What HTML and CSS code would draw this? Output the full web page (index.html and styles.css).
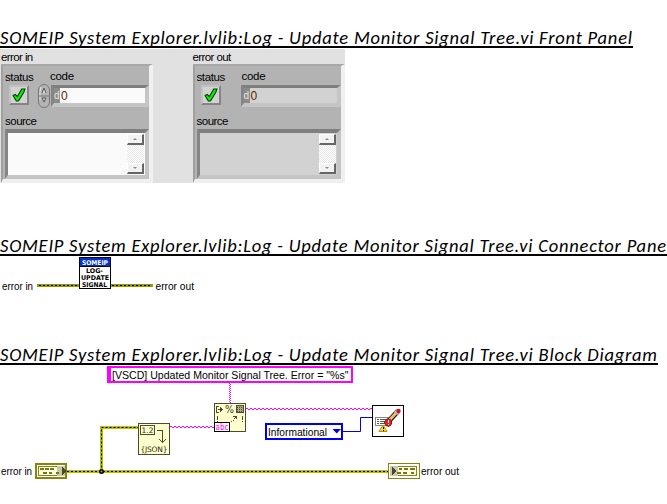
FILE: index.html
```html
<!DOCTYPE html>
<html lang="en">
<head>
<meta charset="utf-8">
<title>SOMEIP System Explorer.lvlib:Log - Update Monitor Signal Tree.vi</title>
<link rel="stylesheet" href="styles.css">
</head>
<body>
<h1 class="heading first"><svg width="633" height="26"><text x="0" y="24" textLength="632">SOMEIP System Explorer.lvlib:Log - Update Monitor Signal Tree.vi Front Panel</text></svg></h1>

<section class="panel">
  <div class="control">
    <div class="caption">error in</div>
    <div class="cluster">
      <div class="fields">
        <div class="status"><span class="label w-status">status</span>
          <span class="led"><svg width="14" height="14" viewBox="0 0 13 13"><path class="tick" d="M1 7L3 6L5 8L9 1L12 1L11 4L6 12L4 12Z"/></svg></span>
        </div>
        <div class="code"><span class="label">code</span>
          <div class="numrow">
            <svg class="spin" width="13" height="24" viewBox="0 0 13 24"><rect x=".5" y=".5" width="11" height="23" rx="5.5" fill="#b4b4b4" stroke="#777"/><path d="M3 3Q1.500 6 2 16" stroke="#e5e5e5" fill="none"/><path d="M1 12H12" stroke="#777"/><path d="M4 9L6 4L8 9M4 14H8L6 18Z" stroke="#555" fill="#ddd"/></svg>
            <div class="number"><span class="radix">d</span><span class="value">0</span></div>
          </div>
        </div>
      </div>
      <div class="label source-label w-source">source</div>
      <div class="source"><div class="scroll"><span class="arrow up"></span><span class="arrow down"></span></div></div>
    </div>
  </div>
  <div class="control indicator">
    <div class="caption">error out</div>
    <div class="cluster">
      <div class="fields">
        <div class="status"><span class="label w-status">status</span>
          <span class="led"><svg width="14" height="14" viewBox="0 0 13 13"><path class="tick" d="M1 7L3 6L5 8L9 1L12 1L11 4L6 12L4 12Z"/></svg></span>
        </div>
        <div class="code"><span class="label">code</span>
          <div class="numrow">
            <div class="number"><span class="radix">d</span><span class="value">0</span></div>
          </div>
        </div>
      </div>
      <div class="label source-label w-source">source</div>
      <div class="source"><div class="scroll"><span class="arrow up"></span><span class="arrow down"></span></div></div>
    </div>
  </div>
</section>

<h1 class="heading second"><svg width="667" height="26"><text x="0" y="24" textLength="666">SOMEIP System Explorer.lvlib:Log - Update Monitor Signal Tree.vi Connector Pane</text></svg></h1>

<svg class="canvas" width="667" height="44" viewBox="0 256 667 44">
  <path class="err" d="M37 285.5H79M111 285.5H153"/>
  <path class="errdash" d="M39 285.5H79M112 285.5H152"/>
  <rect x="79.5" y="257.5" width="31" height="31" fill="#fff" stroke="#000"/>
  <rect x="80" y="258" width="30" height="8" fill="#0033cc"/>
  <path d="M80 266.5H110" stroke="#000"/>
  <g class="pix">
    <text x="82" y="264.500" textLength="26" lengthAdjust="spacingAndGlyphs" fill="#fff">SOMEIP</text>
    <text x="86" y="273" textLength="17" lengthAdjust="spacingAndGlyphs">LOG-</text>
    <text x="81" y="280" textLength="28" lengthAdjust="spacingAndGlyphs">UPDATE</text>
    <text x="82" y="287" textLength="25" lengthAdjust="spacingAndGlyphs">SIGNAL</text>
  </g>
  <text class="lbl" x="2" y="290" textLength="31" lengthAdjust="spacingAndGlyphs">error in</text>
  <text class="lbl" x="155.500" y="290" textLength="38.500" lengthAdjust="spacingAndGlyphs">error out</text>
</svg>

<h1 class="heading third"><svg width="658" height="26"><text x="0" y="24" textLength="657">SOMEIP System Explorer.lvlib:Log - Update Monitor Signal Tree.vi Block Diagram</text></svg></h1>

<svg class="canvas" width="667" height="139" viewBox="0 365 667 139">
  <path class="err bright" d="M67 471.500H388M101.500 471.500V427.500H138"/>
  <path class="errdash" d="M67 471.500H388M101.500 471.500V427.500H138"/>
  <circle cx="101.500" cy="471.500" r="2.500" fill="#000"/><circle cx="101.500" cy="471.500" r="1" fill="#aa0"/>

  <path d="M229.500 383V403M230.500 384V403" stroke="#f0f" stroke-dasharray="1 1"/>
  <path class="str" d="M170 426.500H214M246 408.500H372"/>
  <path class="str low" d="M172 427.500H214M248 409.500H372"/>

  <rect x="107" y="366" width="246" height="17" fill="#f0f"/>
  <rect x="111" y="368" width="240" height="13" fill="#fff"/>
  <text class="lbl" x="112" y="379" textLength="236.500" lengthAdjust="spacingAndGlyphs">[VSCD] Updated Monitor Signal Tree. Error = "%s"</text>

  <g shape-rendering="crispEdges">
    <rect x="138.500" y="423.500" width="31" height="31" fill="#ffffce" stroke="#4b4b32"/>
    <rect x="140.500" y="425.500" width="14" height="9" fill="none" stroke="#4b4b32"/>
    <path d="M157 430.500H162.500V442M159 439.500H160M160 440.500H161M161 441.500H162M162 442.500H163M163 441.500H164M164 440.500H165M165 439.500H166" fill="none" stroke="#4b4b32"/>
    <rect x="214.500" y="403.500" width="31" height="28" fill="#ffffce" stroke="#4b4b32"/>
    <path d="M216.500 406V413M216 406.500H219M216 412.500H219M218 409.500H223M220.500 407V412M221.500 408V411M217.500 416V420M217.500 421V422M242.500 416V420M242.500 421V422M231 421.500H232M233 420.500H234M234 418.500H235M233 416.500H237M235.500 416V418M236.500 416V419" stroke="#4b4b32"/>
    <rect x="236.500" y="405.500" width="7" height="7" fill="#aaa985" stroke="#4b4b32"/>
    <path d="M237 407.500H243M237 409.500H243M237 411.500H243" stroke="#4b4b32" stroke-dasharray="1 1"/>
    <rect x="214.500" y="422.500" width="15" height="9" fill="#fff" stroke="#000"/>
  </g>
  <text class="pix node" x="141.500" y="433" textLength="12">1.2</text>
  <text class="pix node" x="140.500" y="452" textLength="27">{JSON}</text>
  <text class="pct" x="225" y="413" textLength="9" lengthAdjust="spacingAndGlyphs">%</text>
  <text class="abc" x="215.500" y="430" textLength="13" lengthAdjust="spacingAndGlyphs">abc</text>

  <rect x="266" y="424" width="76" height="15" fill="#fff" stroke="#0000f0" stroke-width="2"/>
  <text class="lbl" x="268" y="436" textLength="59" lengthAdjust="spacingAndGlyphs">Informational</text>
  <path d="M332.500 429H341L336.700 433.500Z" fill="#0000e0"/>
  <path d="M343 431.500H360.500V417.500H372" fill="none" stroke="#0000f0"/>

  <rect x="372.500" y="405.500" width="31" height="31" fill="#fff" stroke="#000"/>
  <g>
    <rect x="375.500" y="417.500" width="15" height="8" fill="#fff" stroke="#888"/>
    <path d="M377 419.500H379M380 419.500H387M377 421.500H379M380 421.500H386M377 423.500H379M380 423.500H385" stroke="#555"/>
    <path d="M383 425L387 431.500H379Z" fill="#ffd83a" stroke="#b98b00"/>
    <path d="M383.500 427V429M383.500 430V431" stroke="#000"/>
    <path d="M388 422L398 411" stroke="#222" stroke-width="5"/>
    <path d="M389 420.500L397 412" stroke="#f3ba78" stroke-width="2.800"/>
    <path d="M395.500 413.500L398 411" stroke="#bbb" stroke-width="4.500"/>
    <circle cx="398.500" cy="411" r="2.200" fill="#d3122a"/>
    <path d="M385.500 420.500L388 418.500L391.500 420.500V424L389 426.500L386 425.500L384.500 423Z" fill="#e82020" stroke="#8c1010"/>
    <path d="M388.500 420V423M388.500 424V425" stroke="#fff"/>
  </g>

  <g shape-rendering="crispEdges">
    <rect x="36" y="464" width="30" height="14" fill="#fff" stroke="#86860a" stroke-width="2"/>
    <rect x="38.500" y="466.500" width="25" height="9" fill="#fffff0" stroke="#86860a"/>
    <rect x="57" y="466" width="8" height="10" fill="#cacaa0"/>
    <path d="M40 469H44M45 469H49M50 469H54M43 473H47M49 473H52M56 473H59" stroke="#77770a" stroke-width="2"/>
    <path d="M62 467L66 471L62 475Z" fill="#444"/>
    <rect x="388.500" y="463.500" width="31" height="15" fill="#fff" stroke="#86860a"/>
    <rect x="391.500" y="466.500" width="25" height="9" fill="#fffff0" stroke="#86860a"/>
    <rect x="390" y="466" width="8" height="10" fill="#cacaa0"/>
    <path d="M399 469H402M404 469H408M410 469H415M397 473H401M403 473H407M411 473H414" stroke="#77770a" stroke-width="2"/>
    <path d="M392 467L396 471L392 475Z" fill="#444"/>
  </g>
  <text class="lbl" x="1" y="475" textLength="31" lengthAdjust="spacingAndGlyphs">error in</text>
  <text class="lbl" x="421" y="475" textLength="38" lengthAdjust="spacingAndGlyphs">error out</text>
</svg>
</body>
</html>
```
FILE: styles.css
```css
* { box-sizing: border-box; }
body { margin: 0; background: #fff; color: #000; font-family: "Liberation Sans", Arial, sans-serif; overflow: hidden; }
svg { display: block; }

.heading { margin: 0; height: 28px; width: max-content; border-bottom: 2px solid #000; overflow: hidden; font: italic 400 18.5px/26px Carlito, Lato, sans-serif; }
.heading svg { overflow: hidden; }
.first { margin-top: 20px; }
.second { margin-top: 45px; }
.third { margin-top: 37px; }

.panel { display: flex; gap: 39px; margin-top: 1px; width: 345px; height: 134px; padding-left: 1px; background: #e1e1e1; }
.control { width: 153px; }
.caption { height: 15px; padding-top: 2px; font-size: 11.5px; line-height: 13px; letter-spacing: -0.6px; white-space: nowrap; }
.cluster { width: 152px; height: 119px; padding: 5px 0 0 2px; background: #b3b3b3; border: 4px solid; border-color: #a8a8a8 #f0f0f0 #f0f0f0 #a0a0a0; border-top-width: 2px; border-left-width: 2px; }
.label { font-size: 11.5px; line-height: 13px; display: block; white-space: nowrap; letter-spacing: -0.3px; }
.w-status { letter-spacing: -0.4px; }
.w-source { letter-spacing: -0.5px; }
.fields { display: flex; height: 44px; }
.status { width: 33px; }
.led { display: flex; align-items: center; justify-content: center; width: 20px; height: 20px; margin: 1px 0 0 4px; background: #d2d2d2; border: 2px solid; border-color: #c1c1c1 #858585 #858585 #c1c1c1; }
.tick { fill: #00f000; stroke: #063806; stroke-width: 1; }
.code { flex: 1; }
.code .label { padding-left: 12px; margin-top: -1px; }
.numrow { display: flex; margin-top: 1px; }
.spin { flex: none; }
.number { flex: 1; display: flex; height: 22px; margin-top: 1px; background: #fafafa; border: 4px solid; border-color: #7f7f7f #c5c5c5 #c5c5c5 #858585; border-left-width: 3px; border-top-width: 3px; font-size: 12px; line-height: 16px; }
.radix { width: 6px; background: #8c8c8c; color: #e6e6e6; font-size: 10px; }
.value { padding-left: 1px; color: #5c2600; }
.source-label { height: 14px; }
.source { width: 144px; height: 50px; background: #fafafa; border: 4px solid; border-color: #7f7f7f #c5c5c5 #c5c5c5 #858585; border-left-width: 3px; padding: 1px; display: flex; justify-content: flex-end; }
.scroll { width: 17px; height: 40px; background: repeating-conic-gradient(#e8e8e8 0 25%, #fff 0 50%) 0 0 / 2px 2px; display: flex; flex-direction: column; justify-content: space-between; }
.arrow { height: 11px; background: #f2f2f2; border: 1px solid; border-color: #fff #666 #666 #fff; border-right-width: 2px; border-bottom-width: 2px; display: flex; justify-content: center; align-items: center; }
.arrow::after { content: ""; border: 2px solid transparent; }
.up::after { border-top: 0; border-bottom-color: #888; }
.down::after { border-bottom: 0; border-top-color: #888; }

.indicator .number, .indicator .source { background: #d2d2d2; }
.indicator .numrow { padding-left: 11px; }

.lbl { font: 11.5px "Liberation Sans", Arial, sans-serif; }
.pix { font: 600 6.5px "DejaVu Sans", sans-serif; }
.node { font-size: 7.5px; font-weight: 400; fill: #2c2c18; }
.pct { font: 10px "DejaVu Sans", sans-serif; fill: #3b3b22; }
.abc { font: 9px "DejaVu Sans", sans-serif; fill: #f0f; }
.err { fill: none; stroke: #999900; stroke-width: 3; }
.bright { stroke: #bdbd00; }
.errdash { fill: none; stroke: #000; stroke-dasharray: 2 2; }
.str { fill: none; stroke: #f0f; stroke-dasharray: 2 2; }
```
